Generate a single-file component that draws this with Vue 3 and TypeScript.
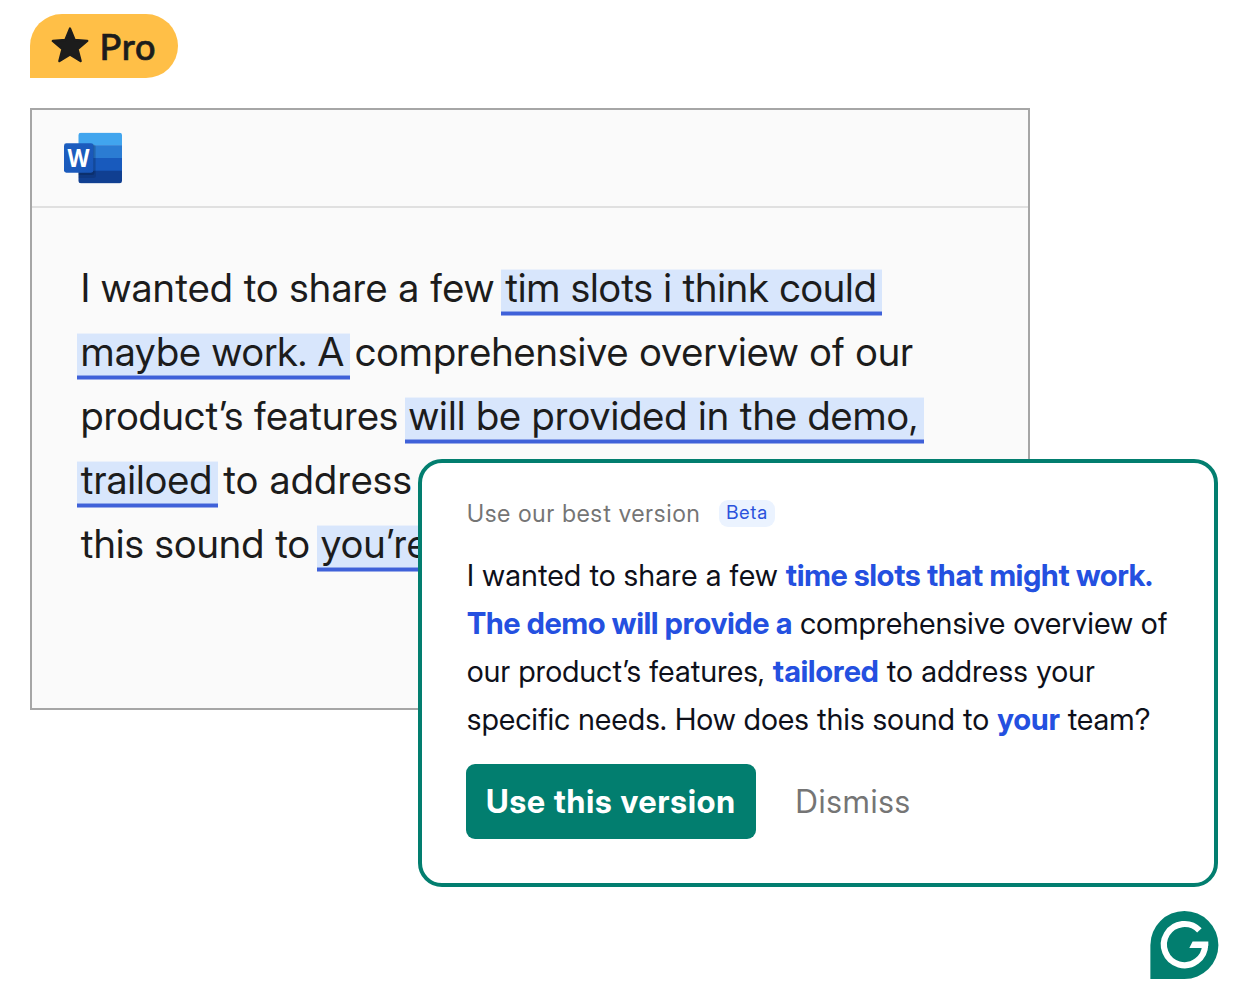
<template>
  <div class="scene">
    <div class="pro-badge">
      <svg class="star" width="40" height="38" viewBox="0 0 40 38">
        <path
          d="M20 2.6 L24.6 14 L37.2 14.9 L27.5 23 L30.6 35 L20 28.4 L9.4 35 L12.5 23 L2.8 14.9 L15.4 14 Z"
          fill="#1c1c1c"
          stroke="#1c1c1c"
          stroke-width="2.4"
          stroke-linejoin="round"
        />
      </svg>
      <span class="pro-label">Pro</span>
    </div>

    <div class="document">
      <div class="document-header">
        <svg class="word-icon" width="60" height="54" viewBox="0 0 60 54">
          <defs>
            <clipPath id="pages">
              <rect x="15.5" y="1.7" width="43.5" height="50.6" rx="2.4" />
            </clipPath>
            <linearGradient id="tile" x1="0" y1="0" x2="1" y2="1">
              <stop offset="0" stop-color="#1d5fc0" />
              <stop offset="1" stop-color="#1855b8" />
            </linearGradient>
          </defs>
          <g clip-path="url(#pages)">
            <rect x="15" y="1.5" width="44" height="13" fill="#41a5ee" />
            <rect x="15" y="14.2" width="44" height="13" fill="#2b7cd3" />
            <rect x="15" y="27" width="44" height="13" fill="#185abd" />
            <rect x="15" y="39.7" width="44" height="13" fill="#103f91" />
            <rect x="12" y="13.5" width="21" height="33.5" rx="2.5" fill="#000" opacity="0.1" />
            <rect x="12" y="13" width="19.5" height="31" rx="2.5" fill="#000" opacity="0.16" />
          </g>
          <rect x="1" y="12.3" width="29.4" height="29.4" rx="2.4" fill="url(#tile)" />
          <text class="word-letter" x="4.4" y="36" textLength="22" lengthAdjust="spacingAndGlyphs">W</text>
        </svg>
      </div>
      <div class="document-body">
        <p v-for="(line, i) in documentLines" :key="i" class="document-line">
          <span
            v-for="(part, j) in line"
            :key="j"
            :class="{ flagged: part.marked }"
            :style="{ letterSpacing: `${part.tracking}px` }"
          >{{ part.text }}</span>
        </p>
      </div>
    </div>

    <div class="suggestion">
      <div class="suggestion-title">
        <span>Use our best version</span>
        <span class="beta">Beta</span>
      </div>
      <div class="suggestion-text">
        <p v-for="(line, i) in suggestionLines" :key="i" class="suggestion-line">
          <span
            v-for="(part, j) in line"
            :key="j"
            :class="{ changed: part.marked }"
            :style="{ letterSpacing: `${part.tracking}px` }"
          >{{ part.text }}</span>
        </p>
      </div>
      <div class="actions">
        <button class="accept">Use this version</button>
        <button class="dismiss">Dismiss</button>
      </div>
    </div>

    <svg class="grammarly" width="69" height="68" viewBox="0 0 69 68">
      <g transform="translate(0.4 0)">
        <path d="M0 68 V34 A34 34 0 1 1 34 68 Z" fill="#027e6f" />
        <path d="M49 19.4 A20.6 20.6 0 1 0 54.7 33.8" fill="none" stroke="#fff" stroke-width="6.2" />
        <path d="M42.2 30.6 H57.9 V34 L57.2 36.9 H38.9 Z" fill="#fff" />
      </g>
    </svg>
  </div>
</template>

<script setup lang="ts">
interface Part {
  text: string;
  tracking: number;
  marked?: boolean;
}

const documentLines: Part[][] = [
  [
    { text: 'I wanted to share a few ', tracking: 0.57 },
    { text: 'tim slots i think could', tracking: 0.38, marked: true },
  ],
  [
    { text: 'maybe work. A', tracking: 0.52, marked: true },
    { text: ' comprehensive overview of our', tracking: 0.56 },
  ],
  [
    { text: 'product’s features ', tracking: 0.37 },
    { text: 'will be provided in the demo,', tracking: 0.52, marked: true },
  ],
  [
    { text: 'trailoed', tracking: 0.5, marked: true },
    { text: ' to address', tracking: 0.73 },
  ],
  [
    { text: 'this sound to ', tracking: 0.51 },
    { text: 'you’re', tracking: 0.55, marked: true },
  ],
];

const suggestionLines: Part[][] = [
  [
    { text: 'I wanted to share a few ', tracking: 0.45 },
    { text: 'time slots that might work.', tracking: -0.04, marked: true },
  ],
  [
    { text: 'The demo will provide a', tracking: -0.02, marked: true },
    { text: ' comprehensive overview of', tracking: 0.42 },
  ],
  [
    { text: 'our product’s features, ', tracking: 0.35 },
    { text: 'tailored', tracking: 0, marked: true },
    { text: ' to address your', tracking: 0.5 },
  ],
  [
    { text: 'specific needs. How does this sound to ', tracking: 0.4 },
    { text: 'your', tracking: 0.1, marked: true },
    { text: ' team?', tracking: 0.25 },
  ],
];
</script>

<style>
body {
  background: #fff;
}
</style>

<style scoped>
.scene {
  position: relative;
  box-sizing: border-box;
  width: 1248px;
  height: 982px;
  padding: 14px 30px 0;
  overflow: hidden;
  font-family: 'Inter Display', Inter, 'Liberation Sans', sans-serif;
}

p {
  margin: 0;
}

.pro-badge {
  display: flex;
  align-items: center;
  box-sizing: border-box;
  width: 148px;
  height: 64px;
  padding-left: 20px;
  border-radius: 32px 32px 32px 0;
  background: #ffbf47;
}

.star {
  margin-top: -2px;
}

.pro-label {
  margin: -1px 0 0 9.5px;
  color: #1c1c1c;
  font-family: Lato, sans-serif;
  font-size: 36px;
  font-weight: 500;
  letter-spacing: 0.8px;
  -webkit-text-stroke: 0.7px #1c1c1c;
}

.document {
  box-sizing: border-box;
  width: 1000px;
  height: 602px;
  margin-top: 30px;
  border: 2px solid #a6a6a6;
  background: #fafafa;
}

.document-header {
  box-sizing: border-box;
  height: 98px;
  padding: 21px 0 0 31px;
  border-bottom: 2px solid #e0e0e0;
}

.word-icon {
  display: block;
}

.word-letter {
  fill: #fff;
  font-family: 'Open Sans', sans-serif;
  font-size: 24.5px;
  font-weight: 700;
}

.document-body {
  padding: 47.5px 0 0 48.7px;
}

.document-line {
  height: 64px;
  color: #1c1c1c;
  font-size: 40px;
  line-height: 64px;
  white-space: pre;
}

.flagged {
  display: inline-block;
  height: 47px;
  margin: 0 -5.5px 0 -4px;
  padding: 0 5.5px 0 4px;
  background: linear-gradient(
    #ebf1fb 1px,
    #d8e6fc 1px 42px,
    #8ea6ea 42px 43px,
    #3f61d9 43px 46px,
    #9aabe9 46px
  );
  line-height: 37px;
}

.suggestion {
  position: absolute;
  top: 459px;
  left: 418px;
  box-sizing: border-box;
  width: 800px;
  height: 428px;
  padding: 34px 44px 0;
  border: 4px solid #027e6f;
  border-radius: 24px;
  background: #fff;
}

.suggestion-title {
  display: flex;
  align-items: center;
  gap: 18px;
  height: 32px;
  padding-left: 1px;
  color: #757575;
  font-size: 24px;
  letter-spacing: 1px;
}

.beta {
  box-sizing: border-box;
  width: 56px;
  height: 27px;
  padding-left: 7.5px;
  border-radius: 9px;
  background: #ebf3ff;
  color: #2a52dc;
  font-size: 19px;
  letter-spacing: 0.8px;
  line-height: 26px;
}

.suggestion-text {
  margin-top: 22px;
  padding-left: 1px;
}

.suggestion-line {
  height: 48px;
  color: #0e101a;
  font-size: 30px;
  line-height: 48px;
  white-space: pre;
}

.changed {
  color: #2450e0;
  font-weight: 700;
}

.actions {
  display: flex;
  align-items: center;
  gap: 39.5px;
  margin-top: 21px;
}

.actions button {
  padding: 0;
  border: none;
  background: none;
  font-family: inherit;
  font-size: 32px;
}

.actions .accept {
  width: 290px;
  height: 75px;
  border-radius: 9px;
  background: #027e6f;
  color: #fff;
  font-weight: 700;
  letter-spacing: 0.95px;
}

.actions .dismiss {
  color: #757575;
  letter-spacing: 1.15px;
}

.grammarly {
  position: absolute;
  top: 911px;
  left: 1150px;
}
</style>
